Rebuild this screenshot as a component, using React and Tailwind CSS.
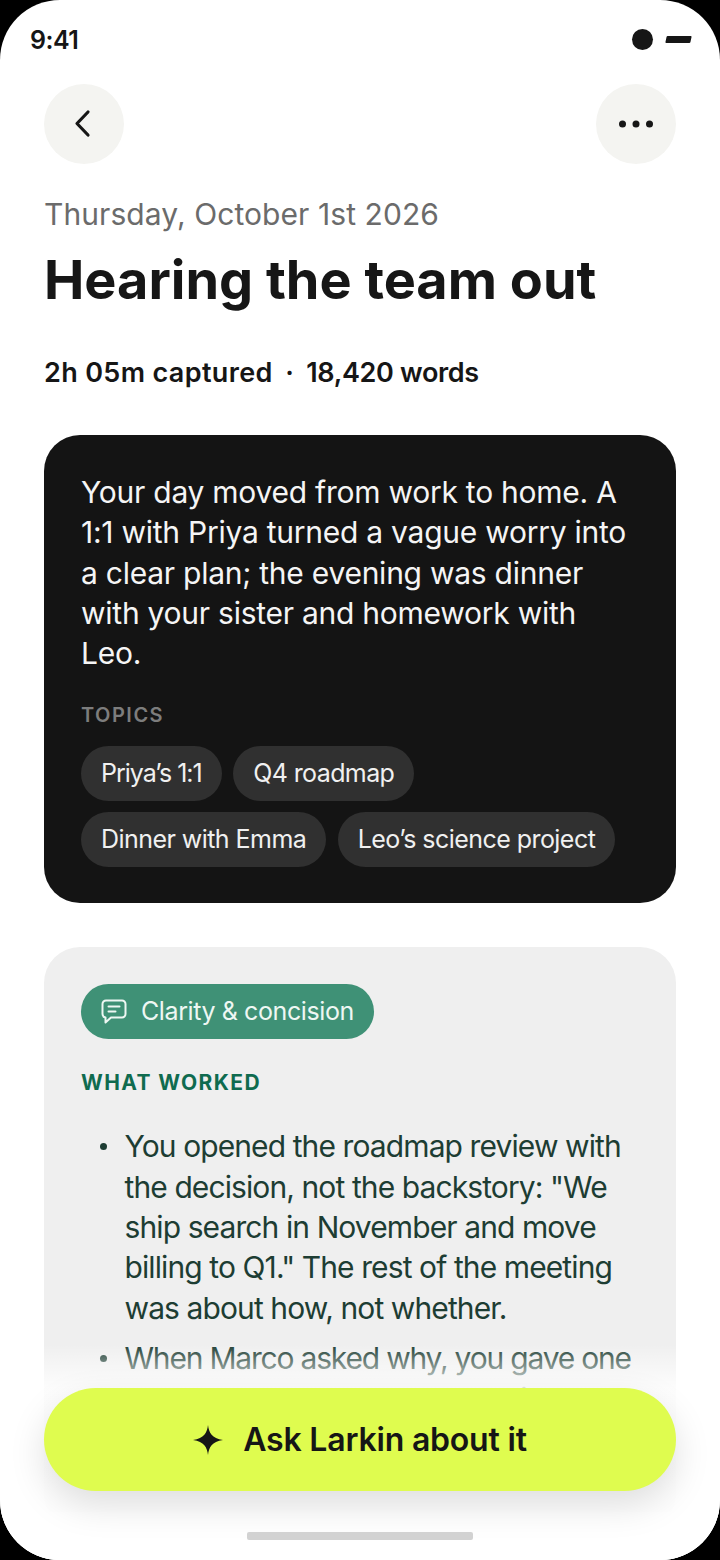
import React from 'react';

const topics = [
  { label: 'Priya’s 1:1', cls: 'tracking-[-1px]' },
  { label: 'Q4 roadmap', cls: 'tracking-[-0.6px]' },
  { label: 'Dinner with Emma', cls: 'tracking-[-0.55px]' },
  { label: 'Leo’s science project', cls: 'tracking-[-0.55px]' },
];

const worked = [
  {
    text: 'You opened the roadmap review with the decision, not the backstory: "We ship search in November and move billing to Q1." The rest of the meeting was about how, not whether.',
    cls: 'tracking-[-0.9px]',
  },
  {
    text: 'When Marco asked why, you gave one reason, then stopped and let him respond.',
    cls: 'tracking-[-1.2px]',
  },
];

function RoundButton({ children }) {
  return (
    <button className="flex h-20 w-20 items-center justify-center rounded-full bg-[#f4f4f1] text-[#161616]">
      {children}
    </button>
  );
}

export default function App() {
  return (
    <div className="relative h-[1560px] w-[720px] overflow-hidden bg-black font-['Inter'] text-[#161616]">
      <div className="relative h-full overflow-hidden rounded-[60px] bg-white">
        {/* Status bar */}
        <div className="flex h-[84px] items-start justify-between pl-[30px] pr-[29px] pt-[24px]">
          <span className="text-[25px] font-semibold leading-[32px] tracking-[-0.5px]">9:41</span>
          <div className="flex items-center gap-[13px] pt-[5px]">
            <span className="h-[21px] w-[21px] rounded-full bg-[#161616]" />
            <span className="h-[7px] w-[25px] -skew-x-12 rounded-[1px] bg-[#161616]" />
          </div>
        </div>

        <div className="px-[44px]">
          {/* Nav */}
          <div className="flex items-center justify-between">
            <RoundButton>
              <svg width="36" height="36" viewBox="0 0 36 36" fill="none" stroke="currentColor" strokeWidth="3.2" strokeLinecap="round" strokeLinejoin="round" className="-translate-x-[1px]">
                <path d="M23 6 L12 17.500 L23 29" />
              </svg>
            </RoundButton>
            <RoundButton>
              <svg width="40" height="10" viewBox="0 0 40 10" fill="currentColor">
                <circle cx="6.5" cy="5" r="3.5" />
                <circle cx="20" cy="5" r="3.5" />
                <circle cx="33.5" cy="5" r="3.5" />
              </svg>
            </RoundButton>
          </div>

          {/* Heading */}
          <div className="mt-[30px] text-[30px] leading-[40px] tracking-[0.08px] text-[#6b6b6b]">Thursday, October 1st 2026</div>
          <h1 className="mt-[14px] text-[54px] font-bold leading-[64px]">Hearing the team out</h1>
          <div className="mt-[43px] flex items-center text-[27px] font-semibold leading-[36px]">
            <span className="tracking-[0.35px]">2h 05m captured</span>
            <span className="mx-[12.5px]">·</span>
            <span className="tracking-[-0.35px]">18,420 words</span>
          </div>

          {/* Summary */}
          <section className="mt-[44px] rounded-[36px] bg-[#141414] px-[37px] pb-[36px] pt-[37px] text-white">
            <p className="text-[30px] leading-[40.3px] tracking-[-0.25px] text-[#f5f5f5]">
              Your day moved from work to home. A 1:1 with Priya turned a vague worry into a clear plan; the evening was dinner with your sister and homework with Leo.
            </p>
            <div className="mt-[28px] text-[20px] font-semibold leading-[28px] tracking-[1.5px] text-[#7d7d7d]">TOPICS</div>
            <div className="mt-[17px] flex flex-wrap gap-x-[11.5px] gap-y-[11px]">
              {topics.map((t) => (
                <span key={t.label} className={`flex h-[55px] items-center rounded-full bg-[#303030] px-[20px] text-[25px] text-[#f0f0f0] ${t.cls}`}>
                  {t.label}
                </span>
              ))}
            </div>
          </section>

          {/* What worked */}
          <section className="mt-[44px] rounded-[36px] bg-[#efefef] px-[37px] pb-[60px] pt-[37px]">
            <div className="flex h-[55px] w-fit items-center gap-[14px] rounded-full bg-[#3f9176] pl-[20px] pr-[20px] text-[25px] tracking-[-0.4px] text-[#eef7f3]">
              <svg width="26" height="26" viewBox="0 0 26 26" fill="none" stroke="currentColor" strokeWidth="2" strokeLinecap="round" strokeLinejoin="round">
                <path d="M5 1.500h16a3.500 3.500 0 0 1 3.500 3.500v10a3.500 3.500 0 0 1-3.500 3.500H10l-5.500 5v-5A3.500 3.500 0 0 1 1.500 15V5A3.500 3.500 0 0 1 5 1.500z" />
                <path d="M7.500 7.500h11M7.500 12.500h7" />
              </svg>
              Clarity &amp; concision
            </div>
            <div className="mt-[29px] text-[21px] font-bold leading-[30px] tracking-[1.4px] text-[#0f6b4f]">WHAT WORKED</div>
            <ul className="mt-[28px]">
              {worked.map((w) => (
                <li key={w.text} className={`mb-[10.5px] flex text-[30px] leading-[40.3px] text-[#1d3d33] ${w.cls}`}>
                  <span className="flex h-[40px] w-[43.5px] shrink-0 items-center pl-[18.5px]">
                    <span className="h-[7px] w-[7px] rounded-full bg-current" />
                  </span>
                  <span>{w.text}</span>
                </li>
              ))}
            </ul>
          </section>
        </div>

        {/* Bottom fade + CTA */}
        <div className="absolute inset-x-0 bottom-0 h-[216px] bg-gradient-to-b from-white/0 via-white/85 via-[20%] to-white" />
        <div className="absolute inset-x-0 bottom-0 h-[48px] bg-white" />
        <button className="absolute left-[44px] top-[1388px] flex h-[103px] w-[632px] items-center justify-center gap-[20px] rounded-full bg-[#dffc4f] text-[32px] font-semibold tracking-[-0.2px] text-[#161616] shadow-[0_14px_36px_rgba(0,0,0,0.13)]">
          <svg width="30" height="30" viewBox="0 0 32 32" fill="currentColor">
            <path d="M16 0 C17 8 20 14.500 32 16 C20 17.500 17 24 16 32 C15 24 12 17.500 0 16 C12 14.500 15 8 16 0z" />
          </svg>
          Ask Larkin about it
        </button>
        <div className="absolute left-[247px] top-[1532px] h-[8px] w-[226px] rounded-[2px] bg-[#d2d2d2]" />
      </div>
    </div>
  );
}
